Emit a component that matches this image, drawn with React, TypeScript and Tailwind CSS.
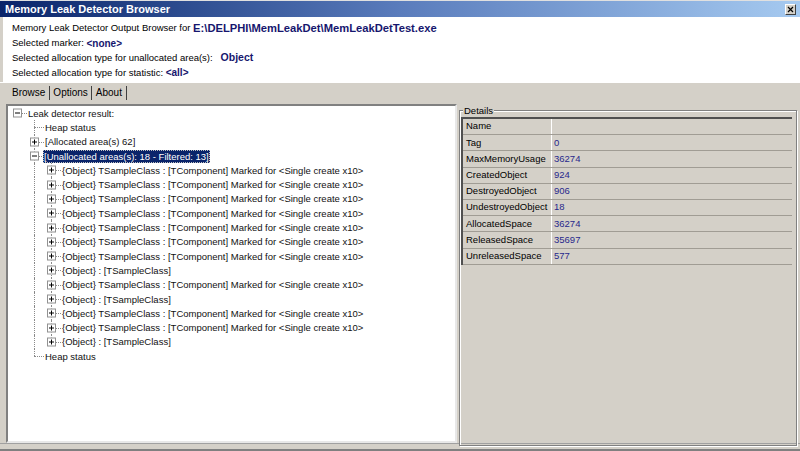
import React from "react";

type Row = {
  depth: number;
  text: string;
  box?: "plus" | "minus";
  up?: boolean;
  down?: boolean;
  guides: boolean[];
  selected?: boolean;
};

const child = "{Object} TSampleClass : [TComponent] Marked for <Single create x10>";
const plain = "{Object} : [TSampleClass]";
const kids = [child, child, child, child, child, child, child, plain, child, plain, child, child, plain];

const rows: Row[] = [
  { depth: 0, text: "Leak detector result:", box: "minus", guides: [] },
  { depth: 1, text: "Heap status", up: true, down: true, guides: [false] },
  { depth: 1, text: "[Allocated area(s) 62]", box: "plus", up: true, down: true, guides: [false] },
  {
    depth: 1,
    text: "[Unallocated areas(s): 18 - Filtered: 13]",
    box: "minus",
    up: true,
    down: true,
    guides: [false],
    selected: true,
  },
  ...kids.map((t, i) => ({
    depth: 2,
    text: t,
    box: "plus" as const,
    up: true,
    down: i < kids.length - 1,
    guides: [false, true],
  })),
  { depth: 1, text: "Heap status", up: true, down: false, guides: [false] },
];

const details: [string, string][] = [
  ["Name", ""],
  ["Tag", "0"],
  ["MaxMemoryUsage", "36274"],
  ["CreatedObject", "924"],
  ["DestroyedObject", "906"],
  ["UndestroyedObject", "18"],
  ["AllocatedSpace", "36274"],
  ["ReleasedSpace", "35697"],
  ["UnreleasedSpace", "577"],
];

function TreeBox({ kind }: { kind: "plus" | "minus" }) {
  return (
    <div className="absolute left-[4px] top-1/2 -translate-y-1/2 w-[9px] h-[9px] border border-[#919191] bg-white">
      <svg width="7" height="7" viewBox="0 0 7 7" className="block">
        <line x1="1" y1="3.5" x2="6" y2="3.5" stroke="#000" strokeWidth="1" />
        {kind === "plus" && <line x1="3.5" y1="1" x2="3.5" y2="6" stroke="#000" strokeWidth="1" />}
      </svg>
    </div>
  );
}

function TreeRow({ row }: { row: Row }) {
  return (
    <div className="flex h-[14.3px] items-center">
      {row.guides.map((g, i) => (
        <div key={i} className="relative w-[17px] h-full shrink-0">
          {g && <div className="absolute left-[8px] top-0 bottom-0 border-l border-dotted border-[#8a8a8a]" />}
        </div>
      ))}
      <div className="relative w-[17px] h-full shrink-0">
        {row.up && <div className="absolute left-[8px] top-0 h-1/2 border-l border-dotted border-[#8a8a8a]" />}
        {row.down && <div className="absolute left-[8px] top-1/2 bottom-0 border-l border-dotted border-[#8a8a8a]" />}
        <div className="absolute left-[8px] right-[-1px] top-1/2 border-t border-dotted border-[#8a8a8a]" />
        {row.box && <TreeBox kind={row.box} />}
      </div>
      {row.selected ? (
        <span className="ml-[0px] bg-[#0a246a] text-white px-[1px] leading-[13px] outline-1 outline-dotted outline-[#c0c0c0] -outline-offset-1 whitespace-nowrap">
          {row.text}
        </span>
      ) : (
        <span className="ml-[2px] whitespace-nowrap leading-[13px] text-[#111]">{row.text}</span>
      )}
    </div>
  );
}

export default function App() {
  return (
    <div className="w-[800px] h-[451px] overflow-hidden bg-[#d4d0c8] flex flex-col font-['Liberation_Sans',Arial,sans-serif] text-[9.5px] text-black">
      {/* title bar */}
      <div className="h-[17px] shrink-0 border-t border-[#e0e0e0] flex items-center justify-between pl-[5px] pr-[4px] bg-gradient-to-r from-[#0a246a] via-[#5a7cbc] to-[#a6caf0]">
        <span className="text-white font-bold text-[11px]">Memory Leak Detector Browser</span>
        <div className="w-[11px] h-[11px] bg-[#d4d0c8] border border-t-white border-l-white border-r-[#404040] border-b-[#404040] flex items-center justify-center">
          <svg width="7" height="7" viewBox="0 0 7 7">
            <path d="M1 1 L6 6 M6 1 L1 6" stroke="#000" strokeWidth="1.2" />
          </svg>
        </div>
      </div>

      {/* header info */}
      <div className="h-[65px] shrink-0 bg-white ml-[3px] pl-[9px] pt-[4px] flex flex-col">
        <div className="h-[15px] flex items-center whitespace-nowrap">
          Memory Leak Detector Output Browser for&nbsp;
          <b className="text-[#16166e] text-[11.2px]">E:\DELPHI\MemLeakDet\MemLeakDetTest.exe</b>
        </div>
        <div className="h-[15px] flex items-center">
          Selected marker:&nbsp;<b className="text-[#16166e] text-[10px]">&lt;none&gt;</b>
        </div>
        <div className="h-[14.5px] flex items-center">
          Selected allocation type for unallocated area(s):&nbsp;&nbsp;&nbsp;
          <b className="text-[#16166e] text-[10.5px]">Object</b>
        </div>
        <div className="h-[14.5px] flex items-center">
          Selected allocation type for statistic:&nbsp;<b className="text-[#16166e] text-[10px]">&lt;all&gt;</b>
        </div>
      </div>

      {/* tabs */}
      <div className="h-[19px] shrink-0 flex items-end pl-[8px] border-t border-white text-[10px]">
        <div className="h-[17px] px-[4px] flex items-center">Browse</div>
        <div className="h-[14px] w-px bg-[#404040] mb-[1px]" />
        <div className="h-[17px] px-[3px] flex items-center">Options</div>
        <div className="h-[14px] w-px bg-[#404040] mb-[1px]" />
        <div className="h-[17px] px-[4px] flex items-center">About</div>
        <div className="h-[14px] w-px bg-[#404040] mb-[1px]" />
      </div>

      {/* main */}
      <div className="flex-1 flex pt-[3px] pl-[6px] pr-[3px] min-h-0">
        <div className="w-[451px] shrink-0 bg-white border-2 border-t-[#808080] border-l-[#808080] border-r-[#e8e8e8] border-b-[#e8e8e8] pl-[1px] overflow-hidden">
          {rows.map((r, i) => (
            <TreeRow key={i} row={r} />
          ))}
        </div>

        <div className="flex-1 pl-[2px] pt-[3px] relative">
          <div className="h-full border border-[#808080] shadow-[inset_1px_1px_0_#fff,1px_1px_0_#fff] mt-[3px] pl-[1px] pr-[4px] pt-[6px]">
            <div className="border-t-2 border-l-2 border-t-[#505050] border-l-[#505050] bg-[#d4d0c8]">
              {details.map(([k, v]) => (
                <div key={k} className="grid grid-cols-[89px_1fr] h-[16.2px] border-b border-[#a09c94]">
                  <div className="pl-[3px] flex items-center border-r border-white whitespace-nowrap">{k}</div>
                  <div className="pl-[2px] flex items-center text-[#28288c]">{v}</div>
                </div>
              ))}
            </div>
          </div>
          <span className="absolute left-[6px] top-[1px] px-[1px] bg-[#d4d0c8] leading-[12px]">Details</span>
        </div>
      </div>
      <div className="h-[8px] shrink-0 border-t border-[#a0a0a0] border-b-2 border-b-[#808080]" />
    </div>
  );
}
